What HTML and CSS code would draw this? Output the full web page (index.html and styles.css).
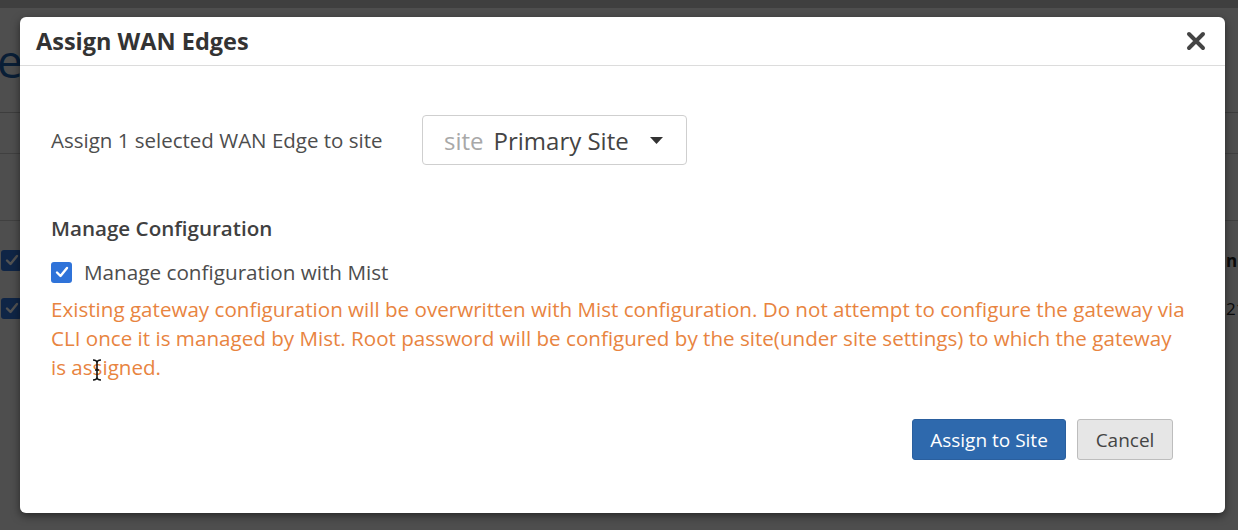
FILE: index.html
```html
<!DOCTYPE html>
<html>
<head>
<meta charset="utf-8">
<link rel="stylesheet" href="styles.css">
</head>
<body>
<div class="page">
  <div class="topbar"></div>
  <div class="page-head"><span class="page-title">e</span></div>
  <div class="rule"></div>
  <div class="subbar"></div>
  <div class="table">
    <div class="trow thead"><span class="pcheck"><svg width="14" height="12" viewBox="0 0 14 12"><path d="M2 6.5 L5.5 10 L12 2" fill="none" stroke="#fff" stroke-width="2.4" stroke-linecap="round" stroke-linejoin="round"/></svg></span><span class="cell-right">nb</span></div>
    <div class="trow"><span class="pcheck"><svg width="14" height="12" viewBox="0 0 14 12"><path d="M2 6.5 L5.5 10 L12 2" fill="none" stroke="#fff" stroke-width="2.4" stroke-linecap="round" stroke-linejoin="round"/></svg></span><span class="cell-right">21</span></div>
  </div>
</div>
<div class="backdrop"></div>
<div class="modal">
  <div class="modal-header">
    <h1 class="modal-title">Assign WAN Edges</h1>
    <button class="close" aria-label="Close">
      <svg width="20" height="20" viewBox="0 0 20 20"><path d="M3 3 L17 17 M17 3 L3 17" stroke="#444" stroke-width="4" stroke-linecap="round"/></svg>
    </button>
  </div>
  <div class="modal-body">
    <div class="assign-row">
      <span class="assign-label">Assign 1 selected WAN Edge to site</span>
      <div class="select">
        <span class="select-prefix">site</span>
        <span class="select-value">Primary Site</span>
        <svg class="caret" width="13" height="7" viewBox="0 0 13 7"><path d="M0 0 H13 L6.5 7 Z" fill="#333"/></svg>
      </div>
    </div>
    <h2 class="section-title">Manage Configuration</h2>
    <label class="check-row">
      <span class="checkbox">
        <svg width="14" height="12" viewBox="0 0 14 12"><path d="M2 6.5 L5.5 10 L12 2" fill="none" stroke="#fff" stroke-width="2.4" stroke-linecap="round" stroke-linejoin="round"/></svg>
      </span>
      <span class="check-label">Manage configuration with Mist</span>
    </label>
    <p class="warning">Existing gateway configuration will be overwritten with Mist configuration. Do not attempt to configure the gateway via CLI once it is managed by Mist. Root password will be configured by the site(under site settings) to which the gateway is assigned.</p>
  </div>
  <div class="modal-footer">
    <button class="btn btn-primary">Assign to Site</button>
    <button class="btn btn-default">Cancel</button>
  </div>
  <svg class="ibeam" width="10" height="22" viewBox="0 0 10 22"><path d="M1 1 Q5 1 5 4 V18 Q5 21 1 21 M9 1 Q5 1 5 4 M5 18 Q5 21 9 21 M3 11 H7" fill="none" stroke="#111" stroke-width="1.6"/></svg>
</div>
</body>
</html>
```
FILE: styles.css
```css
html, body {
  margin: 0;
  padding: 0;
  width: 1238px;
  height: 530px;
  overflow: hidden;
  font-family: "Open Sans", "Liberation Sans", sans-serif;
}
.page {
  width: 1238px;
  height: 530px;
  background: #f3f3f3;
  position: relative;
}
.topbar {
  height: 8px;
  background: #c4c4c4;
}
.page-head {
  height: 104px;
  display: flex;
  align-items: center;
}
.page-title {
  font-size: 46px;
  color: #1d5fa8;
  margin-left: -3px;
  font-weight: 400;
}
.rule {
  height: 1px;
  background: #bdbdbd;
}
.subbar {
  height: 66px;
  border-top: 1px solid #c8c8c8;
  margin-top: 40px;
}
.table {
  border-top: 1px solid #c8c8c8;
  padding-top: 15px;
}
.trow {
  height: 48px;
  display: flex;
  align-items: center;
  justify-content: space-between;
  font-size: 17px;
  color: #222;
}
.thead {
  font-weight: 700;
}
.cell-right {
  width: 22px;
  margin-right: -10px;
}
.pcheck {
  width: 21px;
  height: 21px;
  border-radius: 3px;
  background: #2f73d9;
  margin-left: 1px;
  display: flex;
  align-items: center;
  justify-content: center;
}
.backdrop {
  position: absolute;
  inset: 0;
  background: rgba(0, 0, 0, 0.68);
}
.modal {
  position: absolute;
  left: 20px;
  top: 17px;
  width: 1205px;
  height: 496px;
  background: #fff;
  border-radius: 6px;
  box-shadow: 0 3px 8px rgba(0, 0, 0, 0.5);
  box-sizing: border-box;
  display: flex;
  flex-direction: column;
}
.modal-header {
  height: 48px;
  border-bottom: 1px solid #dcdcdc;
  display: flex;
  align-items: center;
  justify-content: space-between;
  padding: 0 18px 0 16px;
}
.modal-title {
  margin: 0;
  font-size: 23.5px;
  font-weight: 700;
  color: #333;
}
.close {
  border: 0;
  background: none;
  padding: 0;
  width: 22px;
  height: 22px;
  display: flex;
  align-items: center;
  justify-content: center;
}
.modal-body {
  padding: 49px 31px 0 31px;
}
.assign-row {
  display: flex;
  align-items: center;
}
.assign-label {
  width: 371px;
  font-size: 20.5px;
  color: #4d4d4d;
}
.select {
  width: 265px;
  height: 50px;
  box-sizing: border-box;
  border: 1px solid #cfcfcf;
  border-radius: 4px;
  display: flex;
  align-items: center;
  padding: 0 23px 0 21px;
  font-size: 24px;
}
.select-prefix {
  color: #a8a8a8;
  margin-right: 10px;
}
.select-value {
  color: #444;
  flex: 1;
}
.caret {
  display: block;
}
.section-title {
  margin: 49px 0 0;
  font-size: 20.6px;
  font-weight: 600;
  color: #404040;
  line-height: 28px;
}
.check-row {
  display: flex;
  align-items: center;
  margin-top: 17px;
  height: 26px;
}
.checkbox {
  width: 21px;
  height: 21px;
  border-radius: 3px;
  background: #2f73d9;
  display: flex;
  align-items: center;
  justify-content: center;
  margin-right: 12px;
}
.check-label {
  font-size: 20.7px;
  color: #4d4d4d;
}
.warning {
  margin: 10px 6px 0 0;
  font-size: 20.6px;
  line-height: 29px;
  color: #e8843f;
}
.modal-footer {
  display: flex;
  justify-content: flex-end;
  gap: 11px;
  padding: 37px 52px 0 0;
}
.btn {
  height: 41px;
  font-family: "Open Sans", "Liberation Sans", sans-serif;
  font-size: 19px;
  border-radius: 3px;
  padding: 0;
}
.btn-primary {
  background: #2e69ad;
  color: #fff;
  border: 1px solid #2a5f9e;
  width: 154px;
}
.btn-default {
  background: #e6e6e6;
  color: #444;
  border: 1px solid #bdbdbd;
  width: 96px;
}
.ibeam {
  position: absolute;
  left: 72px;
  top: 342px;
}
```
